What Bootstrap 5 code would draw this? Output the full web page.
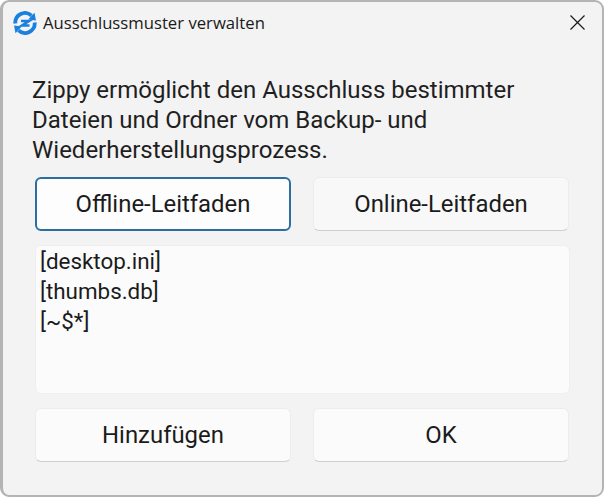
<!DOCTYPE html>
<html lang="de">
<head>
  <meta charset="UTF-8">
  <title>Ausschlussmuster verwalten</title>
  <link href="https://cdn.jsdelivr.net/npm/bootstrap@5.3.0/dist/css/bootstrap.min.css" rel="stylesheet">
  <style>
    html, body { height: 100%; background: #fff; overflow: hidden; }
    body { font-family: Roboto, "Liberation Sans", sans-serif; color: #1b1b1b; }
    .fenster { width: 604px; height: 497px; background: #f3f3f3; border-radius: 9px; border: solid #b4b4b4; border-width: 2px 2px 2px 3px; }
    .titelzeile { height: 41px; padding-left: 10px; padding-right: 17px; }
    .titeltext { font-family: "Open Sans", "Noto Sans", sans-serif; font-size: 16.7px; margin-left: 6px; color: #1a1a1a; }
    .inhalt { padding: 32px 32px 0 32px; }
    .hinweis { font-size: 24px; line-height: 30px; margin: 0 0 12px -3px; color: #1f1f1f; }
    .knopfzeile { gap: 22px; }
    .knopf { width: 256px; height: 54px; font-size: 23.9px; line-height: 1; color: #1b1b1b; background: #fbfbfb; border: 1px solid #ececec; border-bottom-color: #cfcfcf; border-radius: 6px; padding: 2px 0 0; }
    .knopf:hover { background: #fbfbfb; border-color: #ececec; border-bottom-color: #cfcfcf; color: #1b1b1b; }
    .knopf-standard { background: #fdfdfd; border: 2px solid #2a6f9f; }
    .knopf-online { background: #f8f8f8; }
    .muster { width: 535px; height: 149px; margin: 14px 0; background: #fbfbfb; border: 1px solid #efefef; border-radius: 6px; padding: 0 4px; font-size: 22.4px; line-height: 30px; }
  </style>
</head>
<body>
  <div class="fenster">
    <div class="titelzeile d-flex align-items-center">
      <svg width="24" height="24" viewBox="0 0 24 24" class="flex-shrink-0">
        <path d="M2.3 12.5 A9.7 9.7 0 0 1 18.5 4.6" fill="none" stroke="#1a80e0" stroke-width="3.8"/>
        <path d="M15.2 8.6 L23 9.6 L21.5 1.8 Z" fill="#1a80e0"/>
        <path d="M21.7 11.5 A9.7 9.7 0 0 1 5.5 19.4" fill="none" stroke="#1a80e0" stroke-width="3.8"/>
        <path d="M8.8 15.4 L1 14.4 L2.5 22.2 Z" fill="#1a80e0"/>
        <path d="M8 10 H16 L9 14.5 H16.5" fill="none" stroke="#1a80e0" stroke-width="2.6"/>
      </svg>
      <span class="titeltext">Ausschlussmuster verwalten</span>
      <svg width="15" height="15" viewBox="0 0 15 15" class="ms-auto">
        <path d="M0.5 0.5 L14.5 14.5 M14.5 0.5 L0.5 14.5" stroke="#1a1a1a" stroke-width="1.2" fill="none"/>
      </svg>
    </div>
    <div class="inhalt">
      <p class="hinweis">Zippy ermöglicht den Ausschluss bestimmter<br>Dateien und Ordner vom Backup- und<br>Wiederherstellungsprozess.</p>
      <div class="d-flex knopfzeile">
        <button type="button" class="btn knopf knopf-standard">Offline-Leitfaden</button>
        <button type="button" class="btn knopf knopf-online">Online-Leitfaden</button>
      </div>
      <div class="muster">[desktop.ini]<br>[thumbs.db]<br>[~$*]</div>
      <div class="d-flex knopfzeile">
        <button type="button" class="btn knopf">Hinzufügen</button>
        <button type="button" class="btn knopf">OK</button>
      </div>
    </div>
  </div>
  <script src="https://cdn.jsdelivr.net/npm/bootstrap@5.3.0/dist/js/bootstrap.bundle.min.js"></script>
</body>
</html>
